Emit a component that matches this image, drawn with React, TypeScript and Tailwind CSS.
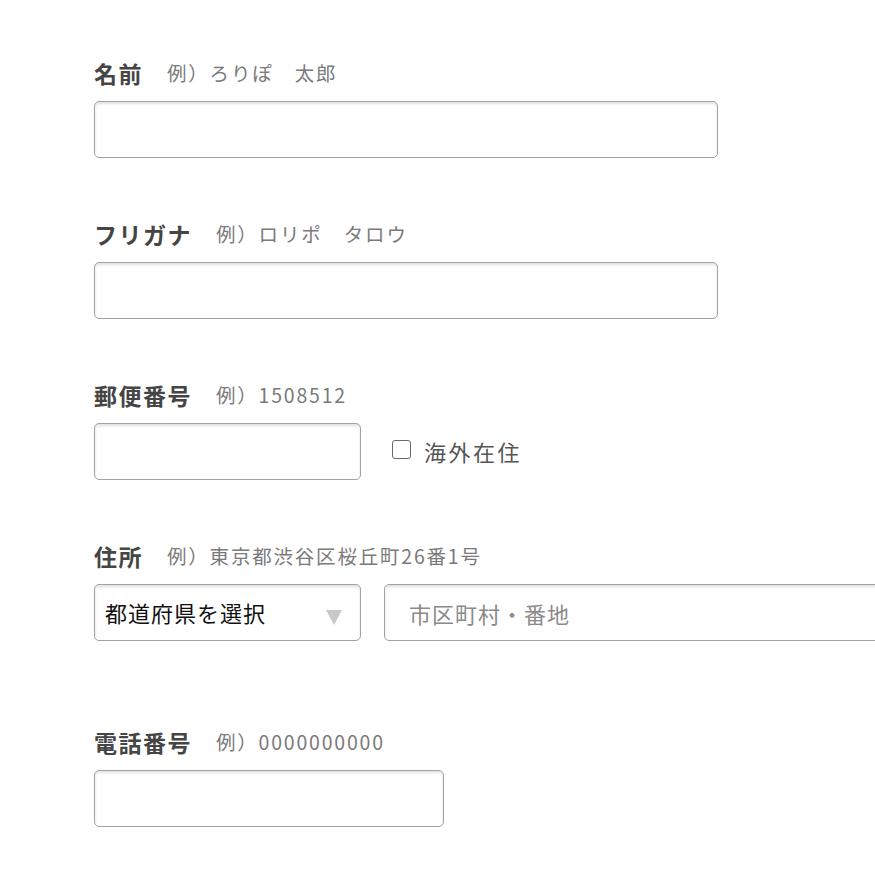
import React from "react";

const font = { fontFamily: '"Noto Sans CJK JP", "Noto Sans", sans-serif' };

const Label = ({ title, hint }: { title: string; hint: string }) => (
  <div className="flex items-center h-10 mb-2">
    <span className="text-[23px] font-bold tracking-[1.5px] text-[#454545]">{title}</span>
    <span className="ml-[24px] text-[19.5px] tracking-[1.8px] text-[#7a7a7a]">{hint}</span>
  </div>
);

const inputCls =
  "h-[57px] rounded-[5px] border border-[#a3a3a3] bg-white shadow-[inset_0_2px_3px_rgba(0,0,0,0.12)] px-4 text-[22px] tracking-[1px] outline-none placeholder:text-[#8a8a8a]";

const App = () => (
  <div className="min-h-screen w-full overflow-hidden bg-white text-[#333] pt-[53px] pl-[94px]" style={font}>
    <div className="flex flex-col gap-14">
      <div>
        <Label title="名前" hint="例）ろりぽ　太郎" />
        <input className={`${inputCls} w-[624px] block`} />
      </div>

      <div>
        <Label title="フリガナ" hint="例）ロリポ　タロウ" />
        <input className={`${inputCls} w-[624px] block`} />
      </div>

      <div>
        <Label title="郵便番号" hint="例）1508512" />
        <div className="flex items-center">
          <input className={`${inputCls} w-[267px]`} />
          <label className="ml-[31px] flex items-center text-[22px] tracking-[2.5px] text-[#555]">
            <span className="block w-[19px] h-[19px] rounded-[3px] border-[1.5px] border-[#6a6a6a] bg-white mr-[13px] -mt-[4px]" />
            海外在住
          </label>
        </div>
      </div>

      <div className="mb-[25px]">
        <Label title="住所" hint="例）東京都渋谷区桜丘町26番1号" />
        <div className="flex items-center w-[1000px]">
          <div className="relative shrink-0 w-[267px] h-[57px] rounded-[5px] border border-[#a3a3a3] bg-white shadow-[inset_0_2px_3px_rgba(0,0,0,0.12)] flex items-center pl-[10px]">
            <span className="text-[22px] tracking-[1px] text-[#111]">都道府県を選択</span>
            <svg className="absolute right-[18px] top-[25px]" width="16" height="15" viewBox="0 0 16 15">
              <path d="M0 0 H16 L8 15 Z" fill="#c8c8c8" />
            </svg>
          </div>
          <input className={`${inputCls} ml-[23px] w-[624px] shrink-0 pl-[24px]`} placeholder="市区町村・番地" />
        </div>
      </div>

      <div>
        <Label title="電話番号" hint="例）0000000000" />
        <input className={`${inputCls} w-[350px] block`} />
      </div>
    </div>
  </div>
);

export default App;
